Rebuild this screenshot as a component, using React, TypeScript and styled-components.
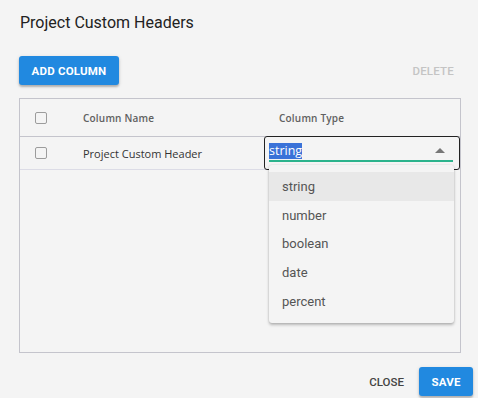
import React from "react";
import styled, { createGlobalStyle } from "styled-components";

const Global = createGlobalStyle`
  html, body { margin: 0; padding: 0; background: #f4f4f4; }
  * { box-sizing: border-box; }
`;

const Dialog = styled.div`
  width: 478px;
  height: 398px;
  background: #f4f4f4;
  display: flex;
  flex-direction: column;
  font-family: Roboto, "Liberation Sans", sans-serif;
  position: relative;
  overflow: hidden;
`;

const Title = styled.h2`
  margin: 0;
  padding: 13px 0 0 20px;
  font-size: 16px;
  line-height: 20px;
  font-weight: 400;
  color: #222;
`;

const Toolbar = styled.div`
  display: flex;
  justify-content: space-between;
  align-items: center;
  margin-top: 23px;
  padding: 0 16px 0 19px;
  height: 29px;
`;

const Button = styled.button<{ $variant?: "contained" | "text"; $disabled?: boolean }>`
  height: 29px;
  border: none;
  border-radius: 3px;
  font-family: Roboto, "Liberation Sans", sans-serif;
  font-size: 11.5px;
  letter-spacing: 0.2px;
  text-transform: uppercase;
  cursor: pointer;
  padding: 0 12px;
  background: ${(p) => (p.$variant === "contained" ? "#2189e0" : "transparent")};
  color: ${(p) =>
    p.$variant === "contained" ? "#fff" : p.$disabled ? "#c4c4c4" : "#444"};
  box-shadow: ${(p) =>
    p.$variant === "contained"
      ? "0 2px 2px rgba(0,0,0,0.22), 0 1px 4px rgba(0,0,0,0.12)"
      : "none"};
  font-weight: ${(p) => (p.$variant === "contained" ? 700 : 500)};
`;

const TableBox = styled.div`
  margin: 13px 17px 0 19px;
  height: 255px;
  border: 1px solid #c4c4cc;
  position: relative;
  font-family: "Open Sans", "Noto Sans", sans-serif;
`;

const Row = styled.div<{ $header?: boolean }>`
  display: grid;
  grid-template-columns: 63px 196px 1fr;
  align-items: center;
  height: ${(p) => (p.$header ? "38px" : "33px")};
  border-bottom: 1px solid ${(p) => (p.$header ? "#c4c4cc" : "#dcdce6")};
`;

const CheckCell = styled.div`
  padding-left: 15px;
  display: flex;
  align-items: center;
`;

const Checkbox = styled.span`
  display: block;
  width: 12px;
  height: 12px;
  border: 1.5px solid #9c9c9c;
  border-radius: 2px;
`;

const HeadCell = styled.div`
  font-size: 10px;
  font-weight: 600;
  color: #606060;
  letter-spacing: 0.2px;
`;

const Cell = styled.div`
  font-size: 11px;
  color: #333;
  position: relative;
  height: 100%;
  display: flex;
  align-items: center;
`;

const Editor = styled.div`
  position: absolute;
  left: -15px;
  right: 0;
  top: -1px;
  height: 34px;
  border: 1px solid #222;
  border-radius: 3px;
  padding: 4px 6px 0 4px;
  background: #f4f4f4;
  z-index: 1;
`;

const EditorInput = styled.div`
  height: 21px;
  border-bottom: 2px solid #2bb38c;
  display: flex;
  align-items: center;
  justify-content: space-between;
  padding-right: 8px;
`;

const Selected = styled.span`
  background: #3a72d8;
  color: #fff;
  font-size: 12.5px;
  line-height: 16px;
  font-family: "Open Sans", "Noto Sans", sans-serif;
`;

const Menu = styled.ul`
  position: absolute;
  left: 269px;
  top: 165px;
  width: 185px;
  margin: 0;
  padding: 7px 0 7px;
  list-style: none;
  background: #f4f4f4;
  border-radius: 3px;
  box-shadow: 0 2px 3px rgba(0,0,0,0.25), 0 0 2px rgba(0,0,0,0.12);
  z-index: 2;
`;

const MenuItem = styled.li<{ $active?: boolean }>`
  height: 28.75px;
  display: flex;
  align-items: center;
  padding-left: 13px;
  font-family: Roboto, "Liberation Sans", sans-serif;
  font-size: 13px;
  color: #555;
  background: ${(p) => (p.$active ? "#e8e8e8" : "transparent")};
`;

const Footer = styled.div`
  display: flex;
  justify-content: flex-end;
  align-items: center;
  gap: 3px;
  margin-top: 14px;
  padding-right: 5px;
`;

const types = ["string", "number", "boolean", "date", "percent"];

export default function App() {
  return (
    <>
      <Global />
      <Dialog>
        <Title>Project Custom Headers</Title>
        <Toolbar>
          <Button $variant="contained" style={{ width: 100 }}>Add Column</Button>
          <Button $variant="text" $disabled style={{ padding: "0 8px" }}>Delete</Button>
        </Toolbar>
        <TableBox>
          <Row $header>
            <CheckCell><Checkbox /></CheckCell>
            <HeadCell>Column Name</HeadCell>
            <HeadCell>Column Type</HeadCell>
          </Row>
          <Row>
            <CheckCell><Checkbox /></CheckCell>
            <Cell>Project Custom Header</Cell>
            <Cell>
              <Editor>
                <EditorInput>
                  <Selected>string</Selected>
                  <svg width="10" height="5" viewBox="0 0 10 5">
                    <polygon points="0,5 5,0 10,5" fill="#777" />
                  </svg>
                </EditorInput>
              </Editor>
            </Cell>
          </Row>
        </TableBox>
        <Footer>
          <Button $variant="text" style={{ padding: "0 12px", letterSpacing: 0 }}>Close</Button>
          <Button $variant="contained" style={{ width: 54 }}>Save</Button>
        </Footer>
        <Menu>
          {types.map((t, i) => (
            <MenuItem key={t} $active={i === 0}>{t}</MenuItem>
          ))}
        </Menu>
      </Dialog>
    </>
  );
}
